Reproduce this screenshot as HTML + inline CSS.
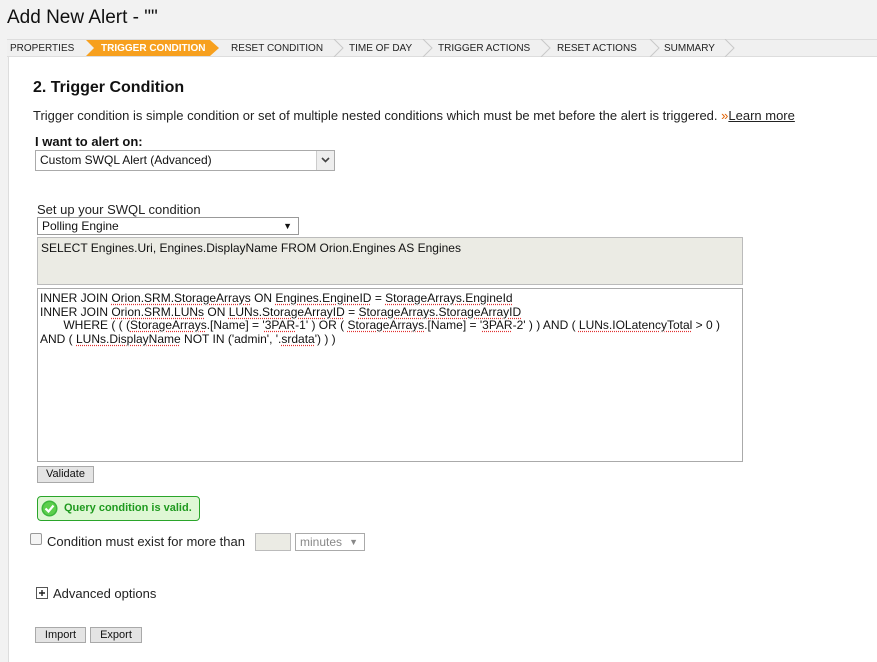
<!DOCTYPE html>
<html><head><meta charset="utf-8"><style>
*{margin:0;padding:0;box-sizing:border-box}
body{width:877px;height:662px;background:#f2f2f2;font-family:"Liberation Sans",Arial,sans-serif;color:#111;position:relative;overflow:hidden}
.a{position:absolute;white-space:nowrap}
.sp{text-decoration:underline dotted #e03030;text-underline-offset:2px}
.btn{position:absolute;background:#e4e4e4;border:1px solid #a9a9a9;font-size:11px;text-align:center;line-height:15px;color:#111}
.t{font-size:10px;color:#222;top:43px}
</style></head><body>
<div class="a" style="left:7px;top:7px;font-size:19px;color:#111">Add New Alert - ""</div>
<div class="a" style="left:7px;top:39px;width:870px;height:18px;background:#f0f0f0;border-top:1px solid #ddd;border-bottom:1px solid #ddd"></div>
<svg class="a" style="left:0;top:39px" width="877" height="18">
<polygon points="86,1 210,1 219,9 210,17 86,17 94,9" fill="#f7a01e"/>
<g fill="none" stroke="#c8c8c8" stroke-width="1">
<polyline points="334,0 343,9 334,18"/><polyline points="423,0 432,9 423,18"/><polyline points="541,0 550,9 541,18"/><polyline points="650,0 659,9 650,18"/><polyline points="725,0 734,9 725,18"/>
</g></svg>
<div class="a t" style="left:10px">PROPERTIES</div>
<div class="a t" style="left:101px;color:#fff;font-weight:bold">TRIGGER CONDITION</div>
<div class="a t" style="left:231px">RESET CONDITION</div>
<div class="a t" style="left:349px">TIME OF DAY</div>
<div class="a t" style="left:438px">TRIGGER ACTIONS</div>
<div class="a t" style="left:557px">RESET ACTIONS</div>
<div class="a t" style="left:664px">SUMMARY</div>
<div class="a" style="left:8px;top:57px;width:869px;height:605px;background:#fff;border-left:1px solid #ddd"></div>
<div class="a" style="left:33px;top:79px;font-size:16px;font-weight:bold">2. Trigger Condition</div>
<div class="a" style="left:33px;top:108px;font-size:13px;color:#222">Trigger condition is simple condition or set of multiple nested conditions which must be met before the alert is triggered. <span style="color:#e06000">»</span><span style="text-decoration:underline">Learn more</span></div>
<div class="a" style="left:35px;top:134px;font-size:13px;font-weight:bold">I want to alert on:</div>
<div class="a" style="left:35px;top:150px;width:300px;height:21px;border:1px solid #aaa;background:#fff;font-size:12px;line-height:19px;padding-left:4px">Custom SWQL Alert (Advanced)</div>
<div class="a" style="left:316px;top:151px;width:18px;height:19px;background:#eee;border-left:1px solid #ccc"></div>
<svg class="a" style="left:321px;top:157px" width="9" height="6"><polyline points="1,1 4.5,4.5 8,1" fill="none" stroke="#444" stroke-width="1.6"/></svg>
<div class="a" style="left:37px;top:202px;font-size:13px;color:#222">Set up your SWQL condition</div>
<div class="a" style="left:37px;top:217px;width:262px;height:18px;border:1px solid #999;background:#fff;font-size:12px;line-height:16px;padding-left:4px">Polling Engine<span style="position:absolute;right:6px;font-size:9px">&#9660;</span></div>
<div class="a" style="left:37px;top:237px;width:706px;height:48px;border:1px solid #bbb;background:#ebebe4;font-size:12px;padding:3px 3px">SELECT Engines.Uri, Engines.DisplayName FROM Orion.Engines AS Engines</div>
<div class="a" style="left:37px;top:288px;width:706px;height:174px;border:1px solid #aaa;background:#fff;font-size:12px;line-height:13.5px;padding:3px 2px;white-space:pre">INNER JOIN <span class="sp">Orion.SRM.StorageArrays</span> ON <span class="sp">Engines.EngineID</span> = <span class="sp">StorageArrays.EngineId</span>
INNER JOIN <span class="sp">Orion.SRM.LUNs</span> ON <span class="sp">LUNs.StorageArrayID</span> = <span class="sp">StorageArrays.StorageArrayID</span>
       WHERE ( ( (<span class="sp">StorageArrays</span>.[Name] = '<span class="sp">3PAR</span>-1' ) OR ( <span class="sp">StorageArrays</span>.[Name] = '<span class="sp">3PAR</span>-2' ) ) AND ( <span class="sp">LUNs.IOLatencyTotal</span> &gt; 0 )
AND ( <span class="sp">LUNs.DisplayName</span> NOT IN ('admin', '.<span class="sp">srdata</span>') ) )</div>
<div class="btn" style="left:37px;top:466px;width:57px;height:17px">Validate</div>
<div class="a" style="left:37px;top:496px;width:163px;height:25px;border:1px solid #2aa52a;border-radius:4px;background:#dff7d5"></div>
<svg class="a" style="left:41px;top:500px" width="17" height="17"><circle cx="8.5" cy="8.5" r="8" fill="#3cb63c"/><circle cx="8.5" cy="8.5" r="6.5" fill="#5ccf4c"/><polyline points="4.5,8.5 7.5,11.5 12.5,5.5" fill="none" stroke="#fff" stroke-width="2.2"/></svg>
<div class="a" style="left:64px;top:502px;font-size:11px;font-weight:bold;color:#1f9a1f">Query condition is valid.</div>
<div class="a" style="left:30px;top:533px;width:12px;height:12px;border:1px solid #999;border-radius:2px;background:#f4f4f4"></div>
<div class="a" style="left:47px;top:534px;font-size:13px;color:#222">Condition must exist for more than</div>
<div class="a" style="left:255px;top:533px;width:36px;height:18px;border:1px solid #bbb;background:#ebebe4"></div>
<div class="a" style="left:295px;top:533px;width:70px;height:18px;border:1px solid #aaa;background:#fff;font-size:12px;color:#888;line-height:16px;padding-left:4px">minutes<span style="position:absolute;right:6px;font-size:9px">&#9660;</span></div>
<svg class="a" style="left:36px;top:587px" width="12" height="12"><rect x="0.5" y="0.5" width="11" height="11" fill="#fff" stroke="#555"/><path d="M3 6H9M6 3V9" stroke="#222" stroke-width="1.4"/></svg>
<div class="a" style="left:53px;top:586px;font-size:13px;color:#222">Advanced options</div>
<div class="btn" style="left:35px;top:627px;width:51px;height:16px">Import</div>
<div class="btn" style="left:90px;top:627px;width:52px;height:16px">Export</div>
</body></html>
